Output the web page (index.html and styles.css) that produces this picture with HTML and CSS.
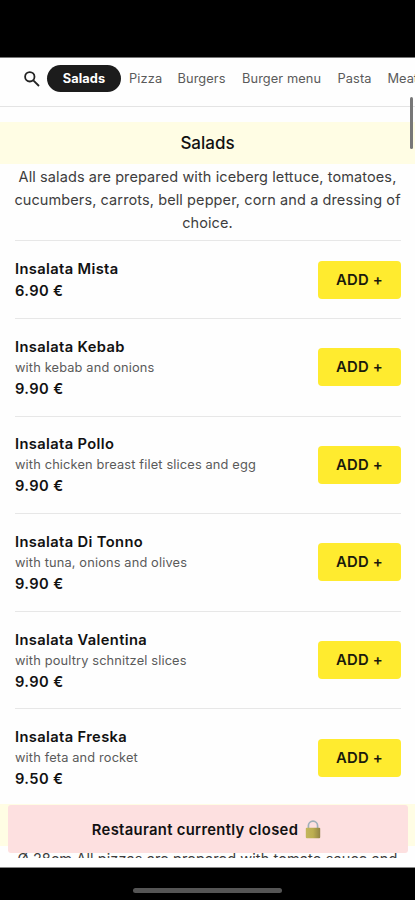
FILE: index.html
```html
<!DOCTYPE html>
<html lang="en">
<head>
<meta charset="utf-8">
<title>Menu</title>
<link rel="stylesheet" href="styles.css">
</head>
<body>
<div class="phone">
  <div class="status"></div>
  <div class="screen">
    <nav class="tabs">
      <svg class="search" viewBox="0 0 16 16"><circle cx="5.8" cy="5.8" r="4.7"/><path d="M9.3 9.3 15 15"/></svg>
      <span class="tab active">Salads</span>
      <span class="tab t-pizza">Pizza</span>
      <span class="tab t-burgers">Burgers</span>
      <span class="tab t-bmenu">Burger menu</span>
      <span class="tab t-pasta">Pasta</span>
      <span class="tab">Meat</span>
    </nav>
    <main>
      <h2 class="band">Salads</h2>
      <p class="intro">All salads are prepared with iceberg lettuce, tomatoes,<br>cucumbers, carrots, bell pepper, corn and a dressing of<br>choice.</p>
      <ul class="items">
        <li class="short"><div><h3>Insalata Mista</h3><b>6.90 €</b></div><button>ADD +</button></li>
        <li><div><h3>Insalata Kebab</h3><p>with kebab and onions</p><b>9.90 €</b></div><button>ADD +</button></li>
        <li><div><h3>Insalata Pollo</h3><p>with chicken breast filet slices and egg</p><b>9.90 €</b></div><button>ADD +</button></li>
        <li><div><h3>Insalata Di Tonno</h3><p>with tuna, onions and olives</p><b>9.90 €</b></div><button>ADD +</button></li>
        <li><div><h3>Insalata Valentina</h3><p>with poultry schnitzel slices</p><b>9.90 €</b></div><button>ADD +</button></li>
        <li><div><h3>Insalata Freska</h3><p>with feta and rocket</p><b>9.50 €</b></div><button>ADD +</button></li>
      </ul>
      <div class="band next"></div>
      <p class="intro pizza-intro">Ø 28cm All pizzas are prepared with tomato sauce and</p>
    </main>
    <div class="scrollbar"></div>
    <div class="closed"><span>Restaurant currently closed</span>
      <svg class="lock" viewBox="0 0 16 19"><defs><linearGradient id="brass" x2="1"><stop offset="0" stop-color="#c3b65c"/><stop offset=".5" stop-color="#bcae50"/><stop offset="1" stop-color="#918344"/></linearGradient></defs><path class="shackle" d="M3.4 9V5.8a4.6 4.6 0 0 1 9.2 0V9"/><rect x=".8" y="7.8" width="14.4" height="10.4" rx="1" fill="url(#brass)"/></svg>
    </div>
  </div>
  <div class="home"><i></i></div>
</div>
</body>
</html>
```
FILE: styles.css
```css
* { box-sizing: border-box; margin: 0; padding: 0; }
body { font-family: Inter, "Liberation Sans", sans-serif; background: #000; color: #111; overflow: hidden; }
.phone { width: 415px; height: 900px; display: flex; flex-direction: column; }
.status { height: 57px; flex: none; }
.screen { position: relative; height: 811px; flex: none; background: #fefefe; overflow: hidden; border-bottom: 1px solid #888; }
.tabs { height: 50px; display: flex; align-items: center; padding: 0 0 7px 24px; border-bottom: 1px solid #e4e4e4; border-top: 1px solid #777; overflow: hidden; }
.search { width: 16px; height: 16px; flex: none; margin-right: 7px; fill: none; stroke: #222; stroke-width: 1.8; }
.tab { flex: none; font-size: 12.8px; line-height: 20px; color: #5a5a5a; white-space: nowrap; margin-top: 1px; }
.active { width: 74px; height: 27px; margin-top: 0; display: grid; place-items: center; border-radius: 14px; background: #1c1c1c; color: #fff; font-weight: 700; margin-right: 8px; font-size: 12.8px; letter-spacing: .1px; }
.t-pizza { width: 48.5px; letter-spacing: .15px; }
.t-burgers { width: 64.5px; letter-spacing: .1px; }
.t-bmenu { width: 95.5px; letter-spacing: .1px; }
.t-pasta { width: 50px; letter-spacing: .1px; }
main { padding-top: 15px; }
.band { height: 42px; background: #fffde4; text-align: center; font-size: 17px; font-weight: 500; line-height: 42px; }
.intro { text-align: center; font-size: 14.5px; letter-spacing: .1px; line-height: 23.3px; color: #3d3d3d; white-space: nowrap; height: 76px; padding-top: .5px; }
.items { list-style: none; margin: 0 14px 0 15px; }
.items li { height: 97.6px; border-top: 1px solid #e7e7e7; display: flex; justify-content: space-between; align-items: center; }
.items li.short { height: 78px; }
.items div { padding-top: 2px; }
.items .short div { padding-top: 1px; }
h3, b { display: block; font-size: 14.7px; letter-spacing: .37px; line-height: 22px; font-weight: 600; }
.items p { font-size: 12.8px; letter-spacing: .15px; line-height: 20px; color: #5a5a5a; }
b { line-height: 23px; }
button { width: 83px; height: 38px; border: 0; border-radius: 4px; background: #ffeb2f; font: 600 14.8px/38px Inter, sans-serif; letter-spacing: .2px; color: #1a1a0c; }
.next { margin-top: -2px; }
.scrollbar { position: absolute; right: 2px; top: 40px; width: 3px; height: 52px; border-radius: 2px; background: #777; }
.pizza-intro { height: 12px; overflow: hidden; padding: 1px 0 0; }
.closed { position: absolute; left: 8px; right: 7px; top: 748px; height: 48px; border-radius: 3px; background: #fde0e0; display: flex; align-items: center; justify-content: center; gap: 7px; font-size: 14.8px; letter-spacing: .32px; font-weight: 600; padding: 1px 3px 0 0; }
.lock { width: 16px; height: 19px; }
.shackle { fill: none; stroke: #9fb0b8; stroke-width: 1.7; }
.home { flex: 1; display: flex; justify-content: center; padding-top: 20px; }
.home i { width: 149px; height: 5px; border-radius: 3px; background: #555; }
```
